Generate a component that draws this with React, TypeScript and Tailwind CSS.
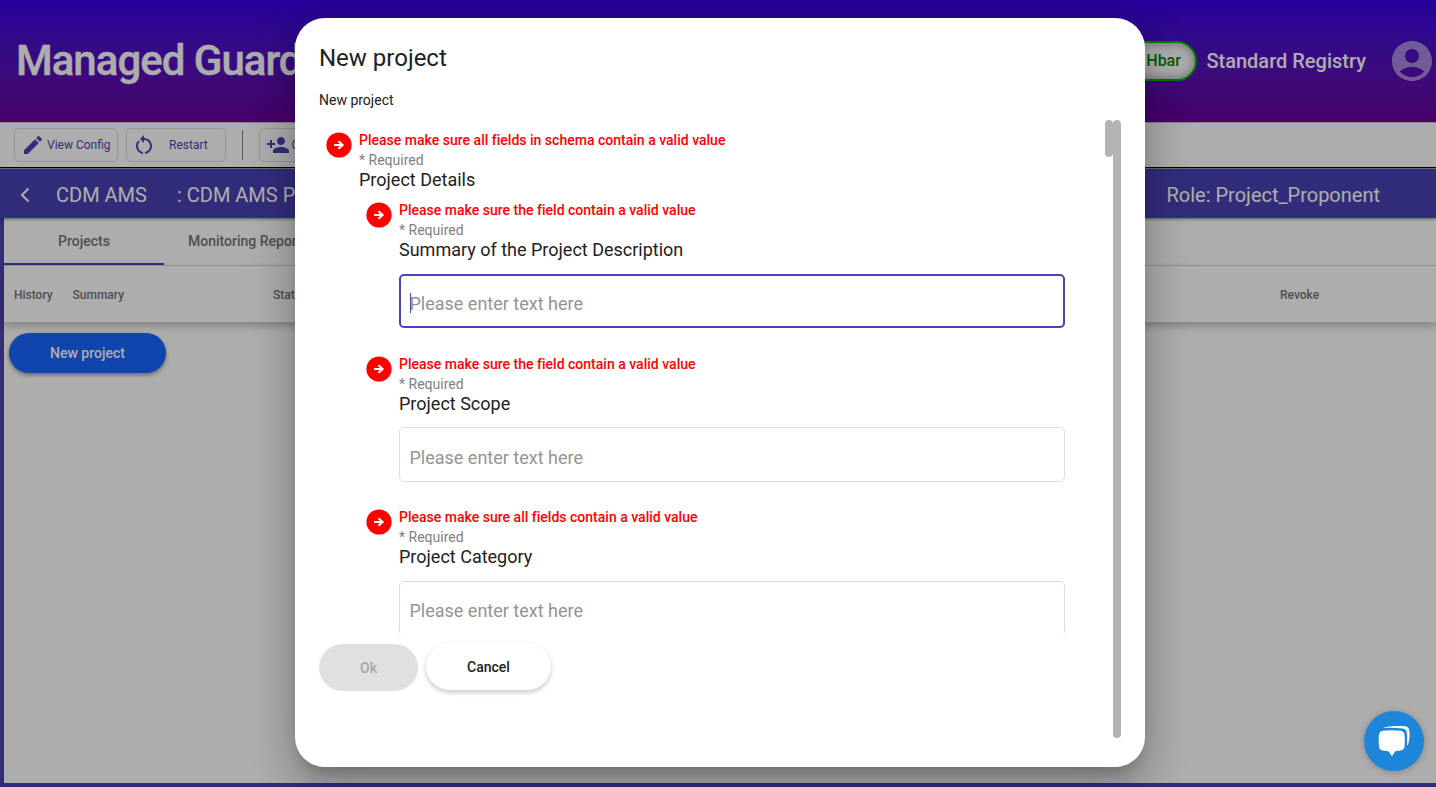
import React from "react";
import { MdAccountCircle, MdEdit, MdPersonAdd, MdRestartAlt } from "react-icons/md";

function ArrowBadge() {
  return (
    <svg viewBox="0 0 26 26" className="mt-[2px] h-[26px] w-[26px] shrink-0">
      <circle cx="13" cy="13" r="12.6" fill="#ff0000" />
      <path d="M8 12h6l-2.200-2.100 1.400-1.400 4.900 4.500-4.900 4.500-1.400-1.400 2.200-2.100h-6z" fill="#fff" />
    </svg>
  );
}

type FieldHeadProps = { error: string; title: string };

function FieldHead({ error, title }: FieldHeadProps) {
  return (
    <div className="flex gap-[7px]">
      <ArrowBadge />
      <div className="whitespace-nowrap">
        <div className="h-5 text-[14px] leading-5 font-medium tracking-[0.01px] text-[#ff0000]">{error}</div>
        <div className="h-5 text-[14px] leading-5 text-[#808080]">* Required</div>
        <div className="h-5 text-[18px] leading-5 text-[#212121]">{title}</div>
      </div>
    </div>
  );
}

type FieldProps = FieldHeadProps & { focused?: boolean };

function Field({ error, title, focused }: FieldProps) {
  return (
    <div className="h-[153.5px] pl-10">
      <FieldHead error={error} title={title} />
      <div
        className={
          focused
            ? "mt-[14px] ml-[33px] flex h-[54px] w-[666px] items-center rounded-[5px] border-2 border-[#4945b5] pt-1 pl-[9px]"
            : "mt-[13.700px] ml-[33px] flex h-[55px] w-[666px] items-center rounded-[5px] border border-[#dedede] pt-[5px] pl-[9.500px]"
        }
      >
        {focused && <span className="-mr-[1.500px] h-5 w-px bg-[#4945b5]" />}
        <span className="text-[18px] text-[#949494]">Please enter text here</span>
      </div>
    </div>
  );
}

function Page() {
  return (
    <div className="flex h-full flex-col bg-white">
      <header className="flex h-[122px] shrink-0 items-center bg-linear-to-b from-[#3800e5] to-[#69009a] pl-4 text-white">
        <h1 className="-mt-[2px] text-[42px] font-medium tracking-[-1px] whitespace-nowrap [-webkit-text-stroke:0.4px_white]">Managed Guard</h1>
        <div className="ml-auto flex items-center">
          <div className="flex h-10 w-[140px] items-center justify-end rounded-full border-2 border-[#00b000] bg-white pr-[14.500px] text-[16px] font-medium text-[#008800] shadow-[inset_0_0_8px_2px_rgba(0,0,0,0.3)]">
            100 Hbar
          </div>
          <span className="ml-[9px] text-[20px] font-medium">Standard Registry</span>
          <MdAccountCircle className="ml-[22px] h-12 w-12 text-white/50" />
        </div>
      </header>
      <div className="flex h-[45px] shrink-0 items-center border-t border-[#c9c9c9] pl-[14px] text-[12px] text-[#4945b5]">
        <div className="flex h-[34px] w-[104px] items-center rounded-[5px] border border-[#dcdcdc] pl-[6px] whitespace-nowrap">
          <MdEdit className="mr-[2px] h-6 w-6" />
          View Config
        </div>
        <div className="ml-2 flex h-[34px] w-[100px] items-center rounded-[5px] border border-[#dcdcdc] pl-[5px]">
          <MdRestartAlt className="mr-[13px] h-6 w-6" />
          Restart
        </div>
        <div className="ml-4 h-[30px] w-px bg-[#808080]" />
        <div className="ml-4 flex h-[34px] w-[120px] items-center rounded-[5px] border border-[#dcdcdc] pl-[5.500px]">
          <MdPersonAdd className="mr-[2px] h-6 w-6" />
          Create User
        </div>
      </div>
      <div className="h-[2px] shrink-0 border-t border-black bg-[#a9a9a9]" />
      <div className="z-10 flex h-[49px] shrink-0 items-center border-b border-[#2d5f9c] bg-[#4b43b5] pt-1 pl-[18px] text-[20px] whitespace-nowrap text-white shadow-[0_1px_3px_rgba(0,0,0,0.5)]">
        <svg viewBox="0 0 14 18" className="h-[18px] w-[14px]">
          <path d="M10.500 2.500L4 9l6.500 6.500" fill="none" stroke="#fff" strokeWidth="2" />
        </svg>
        <span className="ml-6">CDM AMS</span>
        <span className="ml-[30px]">: CDM AMS Policy</span>
        <span className="ml-auto pr-14">Role: Project_Proponent</span>
      </div>
      <main className="flex grow flex-col border-b-4 border-l-4 border-[#4b43b5] text-[#757575]">
        <nav className="flex h-12 shrink-0 border-b border-[#dcdcdc] text-[14px] font-medium">
          <div className="flex h-[47px] w-40 items-center justify-center border-b-2 border-[#4b43b5] pt-[2px]">Projects</div>
          <div className="flex h-[47px] items-center px-6 whitespace-nowrap">Monitoring Reports</div>
        </nav>
        <div className="flex h-[56px] shrink-0 items-center pt-[2px] pl-[10px] text-[12px] font-medium shadow-[0_4px_8px_rgba(0,0,0,0.25)]">
          <span className="w-[58.500px]">History</span>
          <span className="w-[200.500px]">Summary</span>
          <span className="grow">Status</span>
          <span className="w-[156px]">Revoke</span>
        </div>
        <button className="mt-[11px] ml-[5px] h-10 w-[157px] rounded-full bg-[#1966ff] text-[14px] font-medium text-white shadow-[0_2px_4px_rgba(0,0,0,0.4)]">
          New project
        </button>
      </main>
    </div>
  );
}

function Dialog() {
  return (
    <section className="flex h-[749px] w-[850px] flex-col rounded-[30px] bg-white px-6 text-[#212121] shadow-[0_11px_15px_-7px_rgba(0,0,0,0.2),0_24px_38px_3px_rgba(0,0,0,0.14),0_9px_46px_8px_rgba(0,0,0,0.12)]">
      <h2 className="mt-6 h-8 text-[24px] leading-8">New project</h2>
      <p className="mt-4 h-5 text-[14px] leading-5">New project</p>
      <div className="mt-[10px] flex h-[618px]">
        <div className="w-[794px]">
          <div className="flex h-[513px] overflow-hidden">
            <div className="w-[786px] pt-[10px] pl-[7px]">
              <FieldHead error="Please make sure all fields in schema contain a valid value" title="Project Details" />
              <div className="pt-[10px]">
                <Field focused error="Please make sure the field contain a valid value" title="Summary of the Project Description" />
                <Field error="Please make sure the field contain a valid value" title="Project Scope" />
                <Field error="Please make sure all fields contain a valid value" title="Project Category" />
              </div>
            </div>
            <div className="h-[37px] w-2 rounded-full bg-[#b3b3b3]" />
          </div>
          <div className="flex gap-2 pt-[10px] text-[14px] font-medium">
            <button className="mt-px h-[47px] w-[99px] rounded-full bg-[#e0e0e0] pt-[2px] text-[#a6a6a6]">Ok</button>
            <button className="h-[47px] w-[125px] rounded-full bg-white pt-[2px] shadow-[0_3px_4px_rgba(0,0,0,0.15),0_1px_6px_rgba(0,0,0,0.08)]">
              Cancel
            </button>
          </div>
        </div>
        <div className="h-[618px] w-2 rounded-full bg-[#b3b3b3]" />
      </div>
    </section>
  );
}

function ChatButton() {
  return (
    <button className="flex h-[60px] w-[60px] items-center justify-center rounded-full bg-[#1e86d9] shadow-[0_1px_6px_rgba(0,0,0,0.25)]">
      <svg viewBox="0 0 32 32" className="h-8 w-8" fill="#fff">
        <path d="M5 3C10 .7 21 .6 27.500 1.200Q30.600 1.600 31.200 5C32 10 31.600 15 30 19.800L28.900 20.300C29.300 15 29.300 11 28.600 6.600Q28.100 3.900 25 3.400C18.500 2.600 12 2.500 5 3Z" />
        <path d="M4.500 5.700Q13.500 4.600 22.800 5.700Q26 6.200 26.500 9.300Q27.300 16 26.500 21.800Q25.900 25 22.800 25.600L17.200 26.200L14.500 30.600Q14 31.200 13.500 30.600L10.500 26.200L4.500 25.600Q1.600 25 1 21.800Q.3 16 1 9.300Q1.500 6.200 4.500 5.700Z" />
      </svg>
    </button>
  );
}

export default function App() {
  return (
    <div className="relative h-[787px] w-[1436px] overflow-hidden font-[Roboto,sans-serif]">
      <Page />
      <div className="absolute inset-0 z-20 flex items-start bg-black/32 pt-[18px] pl-[295px]">
        <Dialog />
      </div>
      <div className="absolute right-3 bottom-4 z-30">
        <ChatButton />
      </div>
    </div>
  );
}
